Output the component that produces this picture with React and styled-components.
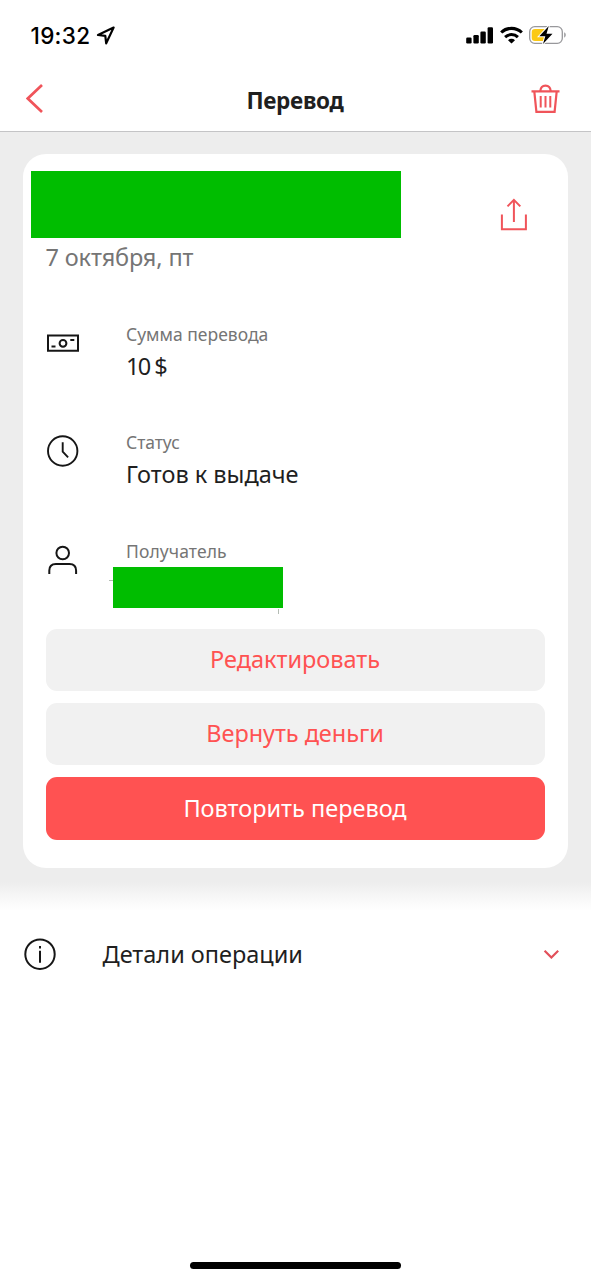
import React from 'react';
import styled, { createGlobalStyle } from 'styled-components';

const GlobalStyle = createGlobalStyle`
  :root {
    --red: #ff5252;
    --icon-red: #f0545a;
    --dark: #1f1f1f;
    --grey: #757575;
    --page: #ededed;
    --mask: #00bd00;
  }
  * {
    box-sizing: border-box;
  }
  body {
    margin: 0;
    background: #fff;
    color: var(--dark);
    font-family: 'Noto Sans', 'Open Sans', sans-serif;
  }
  svg {
    display: block;
    flex: none;
  }
`;

const Screen = styled.div`
  display: flex;
  flex-direction: column;
  height: 1280px;
  overflow: hidden;
`;

const StatusBar = styled.div`
  display: flex;
  align-items: center;
  height: 70px;
  padding: 0 24px 0 30.5px;
  .time {
    width: 65.5px;
    padding-top: 2px;
    font-family: Inter, sans-serif;
    font-size: 22.5px;
    font-weight: 500;
    line-height: 68px;
    letter-spacing: 0.3px;
    color: #000;
    white-space: nowrap;
  }
  .system {
    display: flex;
    gap: 6px;
    margin-left: auto;
  }
`;

const NavBar = styled.header`
  display: grid;
  grid-template-columns: 1fr auto 1fr;
  align-items: center;
  height: 62px;
  padding: 0 31px 3px 26px;
  border-bottom: 1px solid #c4c4c6;
  h1 {
    margin: 0;
    padding: 3px 0 0 4px;
    font-size: 22.5px;
    font-weight: 700;
    line-height: 30px;
    letter-spacing: ${(p) => p.$spacing}px;
  }
  svg:last-child {
    justify-self: end;
  }
`;

const Main = styled.main`
  padding: 22px 23px 42px;
  background: linear-gradient(
    to bottom,
    var(--page) 750px,
    #f7f7f7 765px,
    #fff 779px
  );
`;

const Card = styled.section`
  height: 714px;
  padding: 17px 23px 28px;
  border-radius: 23px;
  background: #fff;
`;

const CardHead = styled.div`
  display: flex;
  justify-content: space-between;
  padding-right: 18px;
  svg {
    margin-top: 27px;
  }
`;

const Mask = styled.div`
  width: ${(p) => p.$width}px;
  height: ${(p) => p.$height}px;
  margin-left: ${(p) => p.$shift}px;
  background: var(--mask);
`;

const NameMask = styled(Mask)`
  position: relative;
  margin-top: 4.4px;
  &::before,
  &::after {
    content: '';
    position: absolute;
    background: #b4bcb4;
  }
  &::before {
    left: -4px;
    top: 13px;
    width: 4px;
    height: 1px;
  }
  &::after {
    left: 165px;
    top: 42px;
    width: 1px;
    height: 5px;
  }
`;

const DateText = styled.p`
  margin: 0 0 45.6px -0.5px;
  font-size: 23.5px;
  line-height: 38px;
  letter-spacing: ${(p) => p.$spacing}px;
  color: var(--grey);
`;

const Row = styled.div`
  display: flex;
  gap: 47px;
  height: 108.5px;
  .icon {
    padding-top: 5px;
  }
`;

const Label = styled.div`
  font-size: 17.5px;
  line-height: 24px;
  letter-spacing: ${(p) => p.$spacing}px;
  color: var(--grey);
`;

const Value = styled.div`
  padding-top: 4px;
  font-size: 23.5px;
  line-height: 32px;
  letter-spacing: ${(p) => p.$spacing}px;
`;

const Actions = styled.div`
  display: grid;
  gap: 12px;
  margin-top: -18.3px;
`;

const Button = styled.button`
  height: 62.3px;
  padding: 0 1px 2px 0;
  border: 0;
  border-radius: 11px;
  background: ${(p) => (p.$primary ? 'var(--red)' : '#f1f1f1')};
  color: ${(p) => (p.$primary ? '#fff' : 'var(--red)')};
  font-family: inherit;
  font-size: 23.5px;
  letter-spacing: ${(p) => p.$spacing}px;
`;

const Details = styled.div`
  display: flex;
  align-items: center;
  height: 44px;
  margin-top: 22px;
  padding: 0 32px 0 24px;
  span {
    margin-left: 46.5px;
    font-size: 23.5px;
    line-height: 44px;
    letter-spacing: ${(p) => p.$spacing}px;
  }
  svg:last-child {
    margin-left: auto;
  }
`;

const HomeBar = styled.div`
  width: 211px;
  height: 7.5px;
  margin: auto auto 11px;
  border-radius: 4px;
  background: #000;
`;

const LocationIcon = () => (
  <svg width="19" height="20" viewBox="0 0 19 20" fill="none" stroke="#000">
    <path d="M17.6 2.6 2 10l7.3.9.9 7.4z" strokeWidth="2.2" strokeLinejoin="round" />
  </svg>
);

const SignalIcon = () => (
  <svg width="28" height="18" viewBox="0 0 28 18">
    <rect x="0.2" y="11.500" width="5.400" height="6" rx="1.2" />
    <rect x="7.400" y="9" width="5.400" height="8.500" rx="1.2" />
    <rect x="14.400" y="5.500" width="5.400" height="12" rx="1.2" />
    <rect x="21.600" y="1.300" width="5.400" height="16.200" rx="1.2" />
  </svg>
);

const WifiIcon = () => (
  <svg width="23" height="18" viewBox="0 0 23 18" fill="none" stroke="#000">
    <path d="M1.200 6.500a14.800 14.800 0 0 1 20.600 0" strokeWidth="3.100" />
    <path d="M5.100 11.200a9.200 9.200 0 0 1 12.800 0" strokeWidth="3" />
    <path d="M11.500 17.400 8 14.200a5 5 0 0 1 7 0z" fill="#000" stroke="none" />
  </svg>
);

const BatteryIcon = () => (
  <svg width="38" height="18" viewBox="0 0 38 18">
    <rect x="0.7" y="0.7" width="32.6" height="16.6" rx="5" fill="#fff" stroke="#98989b" strokeWidth="1.3" />
    <path d="M6 3h10v12H6a3.3 3.3 0 0 1-3.3-3.3V6.3A3.3 3.3 0 0 1 6 3z" fill="#fbc914" />
    <path d="M35.2 6.3q1.6.8 1.6 2.7t-1.6 2.7z" fill="#98989b" />
    <path
      d="M19.800 0 10.300 10.200h6L14 18l9.500-10.200h-6z"
      fill="#000"
      stroke="#fff"
      strokeWidth="2"
      paintOrder="stroke"
    />
  </svg>
);

const BackIcon = () => (
  <svg width="17" height="30" viewBox="0 0 17 30" fill="none" stroke="var(--icon-red)">
    <path d="M16 1 1.800 14.500 16 28" strokeWidth="2.700" />
  </svg>
);

const TrashIcon = () => (
  <svg width="29" height="30" viewBox="0 0 29 30" fill="none" stroke="var(--icon-red)" strokeWidth="2.200">
    <path d="M0.500 7.400h28M3.300 7.400l2.100 20.400h18.200l2.100-20.400" />
    <path d="M9.300 7.100C9.600 3.500 11.500 1.600 14.500 1.600s4.900 1.900 5.200 5.500" />
    <path d="M9.700 12.100v11.500M14.500 12.100v11.500M19.300 12.100v11.500" strokeWidth="2" />
  </svg>
);

const ShareIcon = () => (
  <svg width="27" height="34" viewBox="0 0 27 34" fill="none" stroke="var(--icon-red)" strokeWidth="2">
    <path d="M1.900 16.500v14.800h24v-14.800M13.900 24V2.500M7.500 8.400l6.400-6.500 6.400 6.500" />
  </svg>
);

const MoneyIcon = () => (
  <svg width="33" height="32" viewBox="0 0 33 32" fill="none" stroke="#161616" strokeWidth="2">
    <path d="M2 8.400h30v15.400H2zM5.500 19.500h4M24.300 13h4" />
    <circle cx="17" cy="16.300" r="3.400" />
  </svg>
);

const ClockIcon = () => (
  <svg width="33" height="32" viewBox="0 0 33 32" fill="none" stroke="#161616" strokeWidth="1.900">
    <circle cx="16.700" cy="16" r="14.700" />
    <path d="M16.700 7.200v9.500l5.400 5.600" />
  </svg>
);

const PersonIcon = () => (
  <svg width="33" height="32" viewBox="0 0 33 32" fill="none" stroke="#161616" strokeWidth="2">
    <circle cx="16.700" cy="9" r="6.300" />
    <path d="M3.300 30v-3.400q0-6.600 6.600-6.600h13.600q6.600 0 6.600 6.600v3.400" />
  </svg>
);

const InfoIcon = () => (
  <svg width="32" height="32" viewBox="0 0 32 32" fill="none" stroke="#161616" strokeWidth="2">
    <circle cx="16" cy="16.200" r="14.700" />
    <path d="M16 12.800v12M16 8v2.400" />
  </svg>
);

const ChevronIcon = () => (
  <svg width="16" height="10" viewBox="0 0 16 10" fill="none" stroke="#e2505a" strokeWidth="2.200">
    <path d="M1.600 1.800 8.400 8.500l6.800-6.700" />
  </svg>
);

export default function App() {
  return (
    <Screen>
      <GlobalStyle />
      <StatusBar>
        <div className="time">19:32</div>
        <LocationIcon />
        <div className="system">
          <SignalIcon />
          <WifiIcon />
          <BatteryIcon />
        </div>
      </StatusBar>
      <NavBar $spacing={-0.3}>
        <BackIcon />
        <h1>Перевод</h1>
        <TrashIcon />
      </NavBar>
      <Main>
        <Card>
          <CardHead>
            <Mask $width={370} $height={67} $shift={-15} />
            <ShareIcon />
          </CardHead>
          <DateText $spacing={-0.15}>7 октября, пт</DateText>
          <Row>
            <div className="icon">
              <MoneyIcon />
            </div>
            <div>
              <Label $spacing={0}>Сумма перевода</Label>
              <Value $spacing={-1.6}>10 $</Value>
            </div>
          </Row>
          <Row>
            <div className="icon">
              <ClockIcon />
            </div>
            <div>
              <Label $spacing={-0.05}>Статус</Label>
              <Value $spacing={0}>Готов к выдаче</Value>
            </div>
          </Row>
          <Row>
            <div className="icon">
              <PersonIcon />
            </div>
            <div>
              <Label $spacing={0.1}>Получатель</Label>
              <NameMask $width={170} $height={41} $shift={-13} />
            </div>
          </Row>
          <Actions>
            <Button $spacing={0}>Редактировать</Button>
            <Button $spacing={-0.05}>Вернуть деньги</Button>
            <Button $primary $spacing={0}>
              Повторить перевод
            </Button>
          </Actions>
        </Card>
      </Main>
      <Details $spacing={0}>
        <InfoIcon />
        <span>Детали операции</span>
        <ChevronIcon />
      </Details>
      <HomeBar />
    </Screen>
  );
}
